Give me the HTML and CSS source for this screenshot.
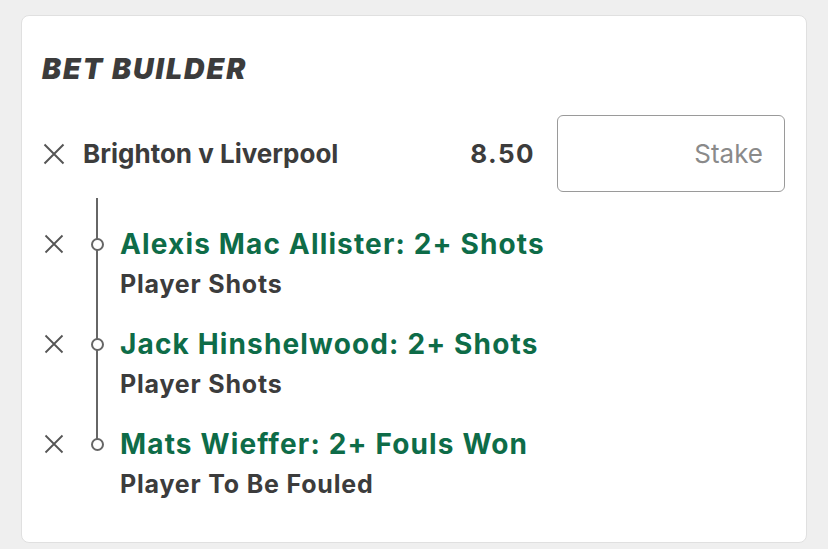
FILE: index.html
```html
<!DOCTYPE html>
<html>
<head>
<meta charset="utf-8">
<link rel="stylesheet" href="styles.css">
</head>
<body>
<div class="card">
  <h1 class="title">BET BUILDER</h1>
  <div class="event">
    <span class="x x-lg"><svg viewBox="0 0 22 22" width="22" height="22"><path d="M1.5 1.5L20.5 20.5M20.5 1.5L1.5 20.5" stroke="#555" stroke-width="2" fill="none"/></svg></span>
    <span class="event-name">Brighton v Liverpool</span>
    <span class="odds">8.50</span>
    <div class="stake">Stake</div>
  </div>
  <div class="legs">
    <div class="leg">
      <span class="x"><svg viewBox="0 0 20 20" width="20" height="20"><path d="M1.5 1.5L18.5 18.5M18.5 1.5L1.5 18.5" stroke="#555" stroke-width="1.8" fill="none"/></svg></span>
      <span class="node"></span>
      <div class="leg-text">
        <div class="leg-title">Alexis Mac Allister: 2+ Shots</div>
        <div class="leg-market">Player Shots</div>
      </div>
    </div>
    <div class="leg">
      <span class="x"><svg viewBox="0 0 20 20" width="20" height="20"><path d="M1.5 1.5L18.5 18.5M18.5 1.5L1.5 18.5" stroke="#555" stroke-width="1.8" fill="none"/></svg></span>
      <span class="node"></span>
      <div class="leg-text">
        <div class="leg-title">Jack Hinshelwood: 2+ Shots</div>
        <div class="leg-market">Player Shots</div>
      </div>
    </div>
    <div class="leg">
      <span class="x"><svg viewBox="0 0 20 20" width="20" height="20"><path d="M1.5 1.5L18.5 18.5M18.5 1.5L1.5 18.5" stroke="#555" stroke-width="1.8" fill="none"/></svg></span>
      <span class="node"></span>
      <div class="leg-text">
        <div class="leg-title">Mats Wieffer: 2+ Fouls Won</div>
        <div class="leg-market">Player To Be Fouled</div>
      </div>
    </div>
  </div>
</div>
</body>
</html>
```
FILE: styles.css
```css
html, body {
  margin: 0;
  padding: 0;
  background: #efefef;
}
body {
  font-family: Inter, "Noto Sans", sans-serif;
  color: #3c3c3c;
}
.card {
  box-sizing: border-box;
  margin: 15px 21px 0 21px;
  width: 786px;
  height: 528px;
  background: #fff;
  border: 1px solid #e0e0e0;
  border-radius: 8px;
  padding: 36px 21px 0 20px;
}
.title {
  margin: 0;
  font-family: Inter, sans-serif;
  font-weight: 900;
  font-style: italic;
  font-size: 28.5px;
  line-height: 34px;
  letter-spacing: 2px;
  color: #3c3c3c;
}
.event {
  display: flex;
  align-items: center;
  margin-top: 29px;
}
.x {
  display: flex;
  width: 24px;
  justify-content: center;
  align-items: center;
  flex: none;
}
.event-name {
  margin-left: 17px;
  font-size: 26px;
  font-weight: 700;
  flex: 1;
}
.odds {
  font-size: 26px;
  font-weight: 700;
  letter-spacing: 1.4px;
  margin-right: 22px;
}
.stake {
  box-sizing: border-box;
  width: 228px;
  height: 77px;
  border: 1.5px solid #9a9a9a;
  border-radius: 6px;
  display: flex;
  align-items: center;
  justify-content: flex-end;
  padding-right: 21px;
  font-size: 26px;
  color: #8a8a8a;
}
.legs {
  position: relative;
  margin-top: 6px;
  padding-top: 31px;
  display: flex;
  flex-direction: column;
  gap: 30px;
}
.legs::before {
  content: "";
  position: absolute;
  left: 54px;
  top: 0;
  bottom: 55px;
  width: 2px;
  background: #666;
}
.leg {
  display: flex;
  align-items: flex-start;
}
.leg .x {
  height: 30px;
}
.node {
  position: relative;
  box-sizing: border-box;
  width: 13px;
  height: 13px;
  margin: 9px 0 0 25px;
  border: 2px solid #666;
  border-radius: 50%;
  background: #fff;
  flex: none;
}
.leg-text {
  margin-left: 16px;
  display: flex;
  flex-direction: column;
  gap: 10px;
}
.leg-title {
  font-size: 28px;
  line-height: 30px;
  font-weight: 700;
  letter-spacing: 1.15px;
  color: #0e6c48;
}
.leg-market {
  font-size: 25px;
  line-height: 30px;
  font-weight: 700;
  letter-spacing: 0.8px;
  color: #3c3c3c;
}
```
